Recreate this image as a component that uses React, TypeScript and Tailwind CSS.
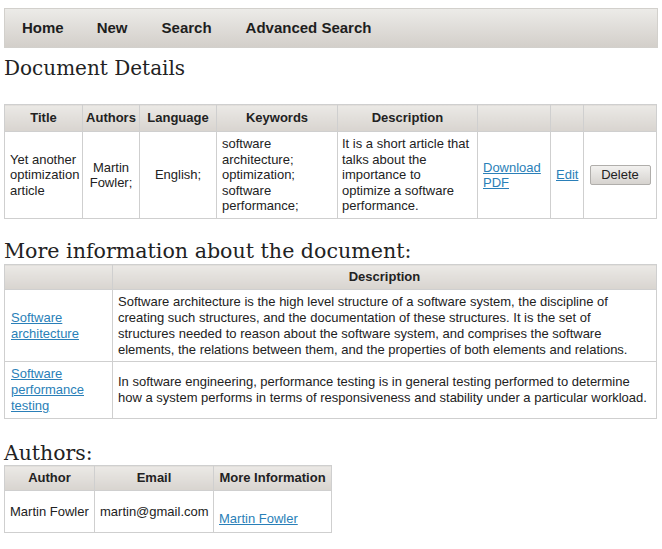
import React from "react";

const sans = { fontFamily: '"Liberation Sans", Arial, sans-serif' };
const serif = { fontFamily: '"DejaVu Serif", serif' };

const thBase =
  "border border-[#cfcfcf] bg-gradient-to-b from-[#ebe9e6] to-[#d8d4cf] font-bold text-[13px] text-[#222] text-center py-0";
const th27 = thBase + " h-[27px] px-[5px]";
const td = "border border-[#cfcfcf] bg-white text-[13px] text-[#222] align-middle";
const link = "text-[#2a7fb8] underline";

export default function App() {
  return (
    <div className="w-[662px] h-[549px] overflow-hidden bg-white px-[4px]" style={sans}>
      <nav className="mt-[8px] h-[40px] w-[654px] border border-[#d2d0cc] bg-gradient-to-b from-[#ecebe8] to-[#d3cfca] flex items-center text-[15px] font-bold text-[#1e1e1e]">
        <span className="ml-[17px]">Home</span>
        <span className="ml-[33px]">New</span>
        <span className="ml-[34px]">Search</span>
        <span className="ml-[34px]">Advanced Search</span>
      </nav>

      <h1 className="mt-[8px] text-[20px] leading-[24px] text-[#222]" style={serif}>
        Document Details
      </h1>

      <table className="mt-[24px] border-collapse table-fixed w-[652px] leading-[15.4px]">
        <colgroup>
          <col className="w-[78px]" />
          <col className="w-[57px]" />
          <col className="w-[77px]" />
          <col className="w-[121px]" />
          <col className="w-[140px]" />
          <col className="w-[73px]" />
          <col className="w-[33px]" />
          <col className="w-[73px]" />
        </colgroup>
        <thead>
          <tr>
            <th className={th27}>Title</th>
            <th className={thBase + " h-[27px] px-0"}>Authors</th>
            <th className={th27}>Language</th>
            <th className={th27}>Keywords</th>
            <th className={th27}>Description</th>
            <th className={th27}></th>
            <th className={th27}></th>
            <th className={th27}></th>
          </tr>
        </thead>
        <tbody>
          <tr className="h-[87px]">
            <td className={td + " pl-[5px] pr-[2px]"}>Yet another optimization article</td>
            <td className={td + " text-center px-[4px]"}>Martin Fowler;</td>
            <td className={td + " text-center px-[6px]"}>English;</td>
            <td className={td + " px-[5px]"}>
              software architecture; optimization; software performance;
            </td>
            <td className={td + " pl-[4px] pr-[2px]"}>
              It is a short article that talks about the importance to
              <br />
              optimize a software performance.
            </td>
            <td className={td + " px-[5px] text-[13.5px]"}>
              <a className={link}>Download PDF</a>
            </td>
            <td className={td + " px-[5px]"}>
              <a className={link}>Edit</a>
            </td>
            <td className={td + " text-center px-[5px]"}>
              <button className="w-[61px] h-[20px] border border-[#b0aeab] rounded-[2px] bg-gradient-to-b from-[#f2f1ef] to-[#d6d3cf] text-[13px] text-[#222] leading-[18px]">
                Delete
              </button>
            </td>
          </tr>
        </tbody>
      </table>

      <h2 className="mt-[20px] text-[20.6px] leading-[24px] text-[#222]" style={serif}>
        More information about the document:
      </h2>

      <table className="mt-[1px] border-collapse table-fixed w-[652px] leading-[16px]">
        <colgroup>
          <col className="w-[108px]" />
          <col className="w-[544px]" />
        </colgroup>
        <thead>
          <tr>
            <th className={thBase + " h-[25px] px-[5px]"}></th>
            <th className={thBase + " h-[25px] px-[5px]"}>Description</th>
          </tr>
        </thead>
        <tbody>
          <tr className="h-[72px]">
            <td className={td + " px-[6px]"}>
              <a className={link}>Software architecture</a>
            </td>
            <td className={td + " px-[5px]"}>
              Software architecture is the high level structure of a software system, the discipline of creating such
              structures, and the documentation of these structures. It is the set of structures needed to reason about
              the software system, and comprises the software elements, the relations between them, and the properties of
              both elements and relations.
            </td>
          </tr>
          <tr className="h-[57px]">
            <td className={td + " px-[6px]"}>
              <a className={link}>Software performance testing</a>
            </td>
            <td className={td + " px-[5px]"}>
              In software engineering, performance testing is in general testing performed to determine how a system
              performs in terms of responsiveness and stability under a particular workload.
            </td>
          </tr>
        </tbody>
      </table>

      <h2 className="mt-[22px] text-[20.4px] leading-[24px] text-[#222]" style={serif}>
        Authors:
      </h2>

      <table className="border-collapse table-fixed w-[327px] leading-[16px]">
        <colgroup>
          <col className="w-[90px]" />
          <col className="w-[119px]" />
          <col className="w-[118px]" />
        </colgroup>
        <thead>
          <tr>
            <th className={thBase + " h-[25px] px-[5px]"}>Author</th>
            <th className={thBase + " h-[25px] px-[5px]"}>Email</th>
            <th className={thBase + " h-[25px] px-[4px] whitespace-nowrap"}>More Information</th>
          </tr>
        </thead>
        <tbody>
          <tr className="h-[42px]">
            <td className={td + " px-[5px] whitespace-nowrap"}>Martin Fowler</td>
            <td className={td + " px-[5px] whitespace-nowrap"}>martin@gmail.com</td>
            <td className={td + " px-[5px]"}>
              <a className={link + " block pt-[14px]"}>Martin Fowler</a>
            </td>
          </tr>
        </tbody>
      </table>

      <h2 className="mt-[18px] text-[20px] leading-[24px] text-[#222]" style={serif}>
        Comments:
      </h2>
    </div>
  );
}
